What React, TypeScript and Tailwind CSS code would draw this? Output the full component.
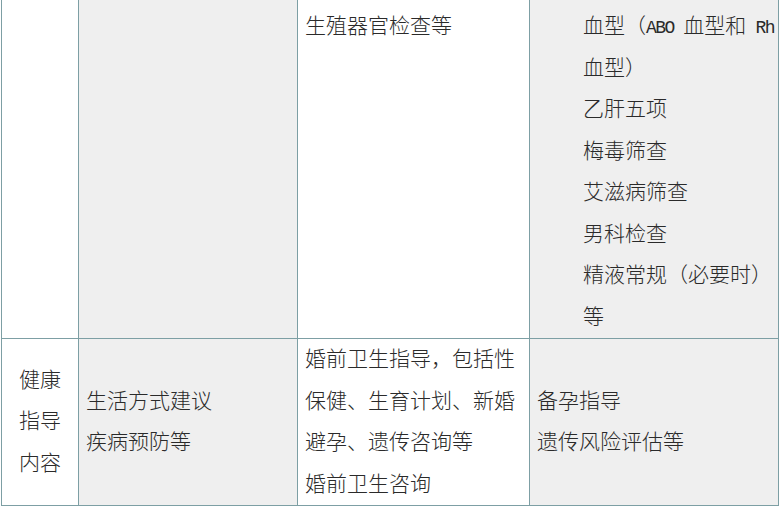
const font = { fontFamily: '"Liberation Serif", "Noto Sans CJK SC", serif' };
const mono = { fontFamily: '"Liberation Mono", monospace' };

const topRight = [
  "血型）",
  "乙肝五项",
  "梅毒筛查",
  "艾滋病筛查",
  "男科检查",
  "精液常规（必要时）",
  "等",
];

const bottomMiddle = [
  "婚前卫生指导，包括性",
  "保健、生育计划、新婚",
  "避孕、遗传咨询等",
  "婚前卫生咨询",
];

function Lines({ items }: { items: string[] }) {
  return (
    <>
      {items.map((t) => (
        <div key={t} className="whitespace-nowrap">
          {t}
        </div>
      ))}
    </>
  );
}

export default function App() {
  return (
    <div className="w-[783px] h-[507px] bg-white overflow-hidden">
      <div
        className="ml-[1px] w-[778px] border-l border-b border-[#7d9fa4] text-[21px] leading-[41.5px] text-[#2a2a2a] font-light"
        style={font}
      >
        {/* top row (continued from above) */}
        <div className="grid grid-cols-[77px_219px_232px_249px] h-[339px] border-b border-[#7d9fa4]">
          <div className="border-r border-[#7d9fa4] bg-white" />
          <div className="border-r border-[#7d9fa4] bg-[#efefef]" />
          <div className="border-r border-[#7d9fa4] bg-white pl-[7px] pt-[6px]">
            生殖器官检查等
          </div>
          <div className="border-r border-[#7d9fa4] bg-[#efefef] pl-[53px] pt-[6px]">
            <div className="whitespace-nowrap h-[41.5px]">
              血型（
              <span className="text-[18px] leading-none tracking-[-1.5px]" style={mono}>
                ABO{" "}
              </span>
              血型和
              <span className="text-[18px] leading-none tracking-[-1.5px]" style={mono}>
                {" "}Rh
              </span>
            </div>
            <Lines items={topRight} />
          </div>
        </div>

        {/* 健康指导内容 */}
        <div className="grid grid-cols-[77px_219px_232px_249px] h-[166px]">
          <div className="border-r border-[#7d9fa4] bg-white flex flex-col justify-center text-center">
            <Lines items={["健康", "指导", "内容"]} />
          </div>
          <div className="border-r border-[#7d9fa4] bg-[#efefef] flex flex-col justify-center pl-[7px]">
            <Lines items={["生活方式建议", "疾病预防等"]} />
          </div>
          <div className="border-r border-[#7d9fa4] bg-white flex flex-col justify-center pl-[7px]">
            <Lines items={bottomMiddle} />
          </div>
          <div className="border-r border-[#7d9fa4] bg-[#efefef] flex flex-col justify-center pl-[7px]">
            <Lines items={["备孕指导", "遗传风险评估等"]} />
          </div>
        </div>
      </div>
    </div>
  );
}
